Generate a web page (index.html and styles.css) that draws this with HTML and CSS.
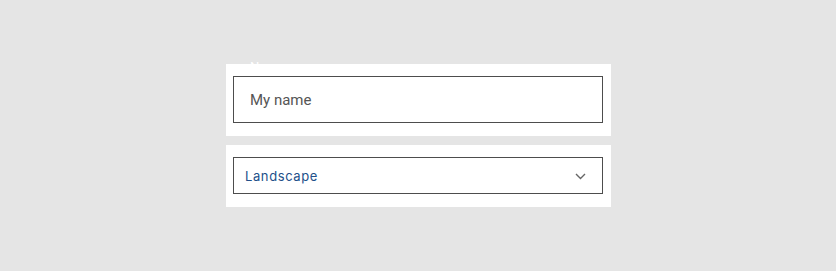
FILE: index.html
```html
<!DOCTYPE html>
<html>
<head>
<meta charset="utf-8">
<link rel="stylesheet" href="styles.css">
</head>
<body>
<div class="stack">
  <div class="card card-name">
    <label class="ghost-label" for="name">Name</label>
    <input id="name" class="text-input" type="text" value="My name">
  </div>
  <div class="card card-select">
    <div class="select">
      <span class="select-value">Landscape</span>
      <svg class="chevron" width="11" height="7" viewBox="0 0 11 7"><path d="M1 1 L5.5 5.5 L10 1" fill="none" stroke="#666" stroke-width="1.4"/></svg>
    </div>
  </div>
</div>
</body>
</html>
```
FILE: styles.css
```css
html, body {
  margin: 0;
  padding: 0;
  background: #e5e5e5;
}
body {
  font-family: Roboto, "Noto Sans", sans-serif;
}
.stack {
  width: 385px;
  margin: 64px 0 0 226px;
  display: flex;
  flex-direction: column;
  gap: 9px;
}
.card {
  background: #ffffff;
  padding: 12px 8px 13px 7px;
  position: relative;
}
.ghost-label {
  position: absolute;
  left: 24px;
  top: -5px;
  font-size: 13px;
  line-height: 15px;
  color: #ffffff;
}
.text-input {
  display: block;
  box-sizing: border-box;
  width: 370px;
  height: 47px;
  margin: 0;
  border: 1px solid #4d4d4d;
  border-radius: 0;
  padding: 0 0 0 16px;
  font-family: Roboto, "Noto Sans", sans-serif;
  font-size: 15px;
  color: #555555;
  background: #fff;
  outline: none;
}
.select {
  box-sizing: border-box;
  width: 370px;
  height: 37px;
  border: 1px solid #4d4d4d;
  display: flex;
  align-items: center;
  justify-content: space-between;
  padding: 0 16px 0 11px;
}
.select-value {
  font-family: Inter, "Noto Sans", sans-serif;
  font-size: 13px;
  letter-spacing: 0.6px;
  color: #22508a;
}
.chevron {
  display: block;
  margin-top: 1px;
}
```
